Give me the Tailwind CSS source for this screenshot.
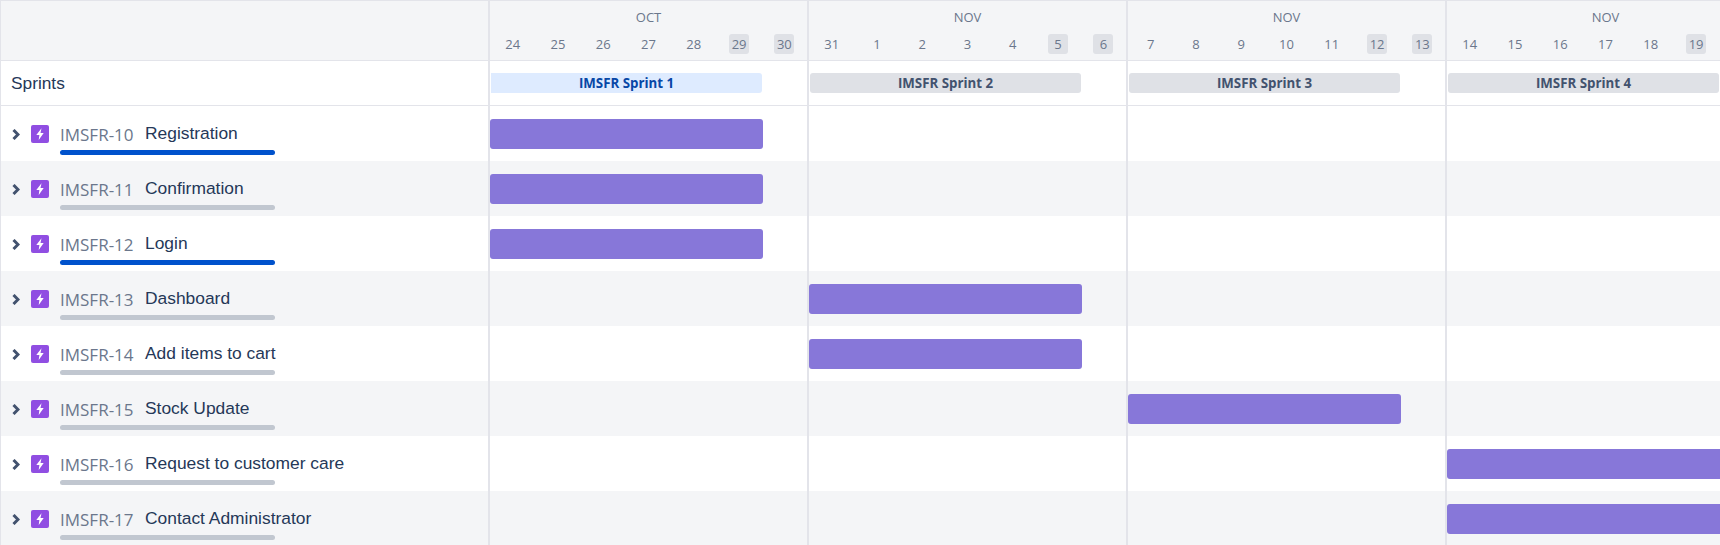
<!DOCTYPE html>
<html lang="en">
<head>
  <meta charset="UTF-8">
  <title>Sprint Timeline</title>
  <script src="https://cdn.jsdelivr.net/npm/@tailwindcss/browser@4"></script>
</head>
<body class="w-[1720px] h-[545px] overflow-hidden bg-white font-['Open_Sans',sans-serif] text-[#253858]">
  <!-- Header -->
  <div class="flex h-[61px] w-[1768px] border-t border-l border-b border-[#e3e4ea] bg-[#f4f5f7]">
    <div class="w-[489px] border-r-2 border-[#e3e4ea]"></div>
    <div class="grid grid-cols-[317px_repeat(3,319px)] text-[13px] text-[#6b778c]">
      <div>
        <div class="pt-[6px] h-[33px] text-center leading-[20px]">OCT</div>
        <div class="grid grid-cols-7 justify-items-center">
          <span class="w-5 h-5 text-center leading-5">24</span><span class="w-5 h-5 text-center leading-5">25</span><span class="w-5 h-5 text-center leading-5">26</span><span class="w-5 h-5 text-center leading-5">27</span><span class="w-5 h-5 text-center leading-5">28</span><span class="w-5 h-5 text-center leading-5 rounded-[3px] bg-[#dfe1e6]">29</span><span class="w-5 h-5 text-center leading-5 rounded-[3px] bg-[#dfe1e6]">30</span>
        </div>
      </div>
      <div class="border-l-2 border-[#e3e4ea]">
        <div class="pt-[6px] h-[33px] text-center leading-[20px]">NOV</div>
        <div class="grid grid-cols-7 justify-items-center">
          <span class="w-5 h-5 text-center leading-5">31</span><span class="w-5 h-5 text-center leading-5">1</span><span class="w-5 h-5 text-center leading-5">2</span><span class="w-5 h-5 text-center leading-5">3</span><span class="w-5 h-5 text-center leading-5">4</span><span class="w-5 h-5 text-center leading-5 rounded-[3px] bg-[#dfe1e6]">5</span><span class="w-5 h-5 text-center leading-5 rounded-[3px] bg-[#dfe1e6]">6</span>
        </div>
      </div>
      <div class="border-l-2 border-[#e3e4ea]">
        <div class="pt-[6px] h-[33px] text-center leading-[20px]">NOV</div>
        <div class="grid grid-cols-7 justify-items-center">
          <span class="w-5 h-5 text-center leading-5">7</span><span class="w-5 h-5 text-center leading-5">8</span><span class="w-5 h-5 text-center leading-5">9</span><span class="w-5 h-5 text-center leading-5">10</span><span class="w-5 h-5 text-center leading-5">11</span><span class="w-5 h-5 text-center leading-5 rounded-[3px] bg-[#dfe1e6]">12</span><span class="w-5 h-5 text-center leading-5 rounded-[3px] bg-[#dfe1e6]">13</span>
        </div>
      </div>
      <div class="border-l-2 border-[#e3e4ea]">
        <div class="pt-[6px] h-[33px] text-center leading-[20px]">NOV</div>
        <div class="grid grid-cols-7 justify-items-center">
          <span class="w-5 h-5 text-center leading-5">14</span><span class="w-5 h-5 text-center leading-5">15</span><span class="w-5 h-5 text-center leading-5">16</span><span class="w-5 h-5 text-center leading-5">17</span><span class="w-5 h-5 text-center leading-5">18</span><span class="w-5 h-5 text-center leading-5 rounded-[3px] bg-[#dfe1e6]">19</span>
        </div>
      </div>
    </div>
  </div>

  <!-- Sprints -->
  <div class="flex h-[45px] w-[1768px] border-l border-b border-[#e3e4ea]">
    <div class="w-[489px] border-r-2 border-[#e3e4ea] pl-[10px] leading-[44px] text-[17.3px] font-['Liberation_Sans',sans-serif]">Sprints</div>
    <div class="grid grid-cols-[317px_repeat(3,319px)] text-[13.3px] font-bold">
      <div class="pl-[1px] pt-[12px]"><div class="w-[271px] h-5 rounded-r-[3px] bg-[#deebff] text-[#0747a6] text-center leading-5">IMSFR Sprint 1</div></div>
      <div class="border-l-2 border-[#e3e4ea] pl-[1px] pt-[12px]"><div class="w-[271px] h-5 rounded-[3px] bg-[#dfe1e6] text-[#42526e] text-center leading-5">IMSFR Sprint 2</div></div>
      <div class="border-l-2 border-[#e3e4ea] pl-[1px] pt-[12px]"><div class="w-[271px] h-5 rounded-[3px] bg-[#dfe1e6] text-[#42526e] text-center leading-5">IMSFR Sprint 3</div></div>
      <div class="border-l-2 border-[#e3e4ea] pl-[1px] pt-[12px]"><div class="w-[271px] h-5 rounded-[3px] bg-[#dfe1e6] text-[#42526e] text-center leading-5">IMSFR Sprint 4</div></div>
    </div>
  </div>

  <!-- Rows -->
  <div id="rows"></div>

  <script>
    const issues = [
      ['IMSFR-10', 'Registration', 0, true],
      ['IMSFR-11', 'Confirmation', 0, false],
      ['IMSFR-12', 'Login', 0, true],
      ['IMSFR-13', 'Dashboard', 1, false],
      ['IMSFR-14', 'Add items to cart', 1, false],
      ['IMSFR-15', 'Stock Update', 2, false],
      ['IMSFR-16', 'Request to customer care', 3, false],
      ['IMSFR-17', 'Contact Administrator', 3, false]
    ];

    const icon = `<svg class="shrink-0" width="18" height="18" viewBox="0 0 18 18"><rect width="18" height="18" rx="2" fill="#904ee2"/><path d="M10.500 3.200 5.300 9.900h3.100l-.7 5 5-6.900H9.500z" fill="#fff"/></svg>`;
    const chevron = `<svg class="shrink-0" width="8" height="11" viewBox="0 0 8 11"><path d="M1.500 1 6 5.500 1.500 10" fill="none" stroke="#42526e" stroke-width="3"/></svg>`;

    document.getElementById('rows').innerHTML = issues.map(([key, title, week, active], i) => {
      const cells = [0, 1, 2, 3].map(w => {
        const border = w === 0 ? '' : 'border-l-2 border-[#e3e4ea]';
        const bar = w === week
          ? `<div class="h-[30px] ${w === 3 ? 'w-[300px] rounded-l-[3px]' : 'w-[273px] rounded-[3px]'} bg-[#8777d9]"></div>`
          : '';
        return `<div class="${border} pt-[13px]">${bar}</div>`;
      }).join('');
      return `<div class="flex h-[55px] w-[1768px] border-l border-[#e3e4ea] ${i % 2 ? 'bg-[#f4f5f7]' : 'bg-white'}">
        <div class="w-[489px] border-r-2 border-[#e3e4ea] flex items-start pl-[11px] pt-[19px] shrink-0">
          <span class="mt-[4px] mr-[11px]">${chevron}</span>
          ${icon}
          <div class="ml-[11px]">
            <div class="flex items-start h-[25px]">
              <span class="w-[85px] text-[17px] leading-[22px] -mt-[1px] text-[#6b778c]">${key}</span>
              <span class="text-[17.4px] leading-[20px] -mt-[2px] font-['Liberation_Sans',sans-serif]">${title}</span>
            </div>
            <div class="h-[5px] w-[215px] rounded-full ${active ? 'bg-[#0052cc]' : 'bg-[#c1c7d0]'}"></div>
          </div>
        </div>
        <div class="grid grid-cols-[317px_repeat(3,319px)]">${cells}</div>
      </div>`;
    }).join('');
  </script>
</body>
</html>
